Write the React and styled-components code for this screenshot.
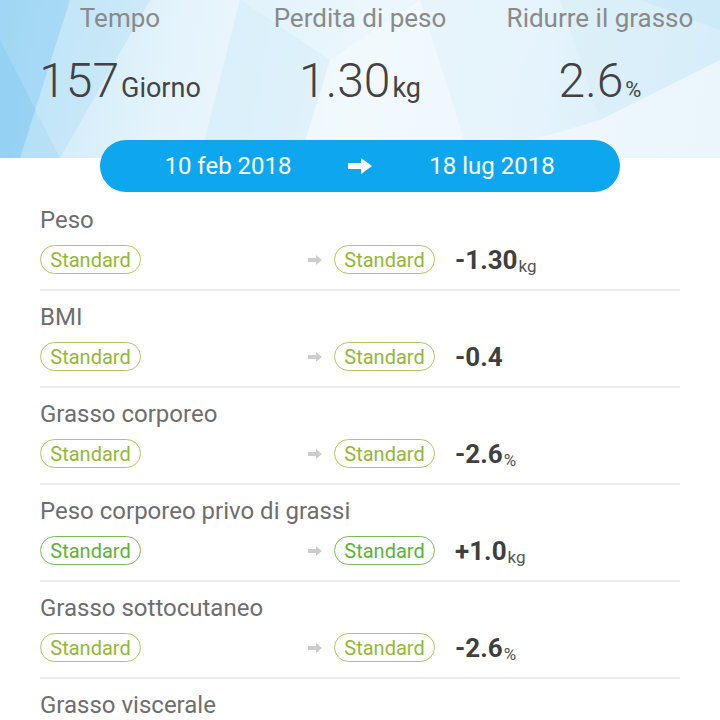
import React from "react";
import styled, { createGlobalStyle } from "styled-components";

const GlobalStyle = createGlobalStyle`
  html, body {
    margin: 0;
    padding: 0;
    background: #ffffff;
    overflow: hidden;
    font-family: Roboto, "Noto Sans", "Liberation Sans", sans-serif;
  }
`;

//  Header with the three summary values
const Header = styled.header`
  position: relative;
  height: 158px;
  overflow: hidden;
  background: linear-gradient(100deg, #b6e0f7 0%, #dcf0fb 25%, #ecf7fd 50%, #e4f3fc 75%, #d2ebf9 100%);
`;

const Backdrop = styled.svg`
  position: absolute;
  inset: 0;
  width: 100%;
  height: 100%;
`;

const Stats = styled.div`
  position: relative;
  display: grid;
  grid-template-columns: repeat(3, 1fr);
`;

const Stat = styled.div`
  display: flex;
  flex-direction: column;
  align-items: center;
  padding-top: 3px;
`;

const StatLabel = styled.div`
  font-size: 26px;
  line-height: 30px;
  color: #8a8a8a;
`;

const StatValue = styled.div`
  margin-top: 20px;
  display: flex;
  align-items: baseline;
  color: #424242;
`;

const BigNumber = styled.span`
  font-size: 48px;
  line-height: 56px;
  font-weight: 300;
`;

const BigUnit = styled.span`
  font-size: ${(p) => p.size || 27}px;
  margin-left: 2px;
  color: #444;
`;

//  Blue date range pill
const RangeBar = styled.div`
  position: relative;
  margin: -18px 100px 0;
  height: 52px;
  border-radius: 26px;
  background: #0ea7ef;
  display: grid;
  grid-template-columns: 1fr auto 1fr;
  align-items: center;
  padding: 0 8px;
  color: #ffffff;
  font-size: 24px;
`;

const RangeDate = styled.span`
  text-align: center;
`;

//  List of measurements
const List = styled.div`
  margin: 2px 40px 0;
`;

const Row = styled.div`
  padding: 12px 0 15px;
  border-bottom: 2px solid #ebebeb;
`;

const RowTitle = styled.div`
  font-size: 24px;
  line-height: 28px;
  color: #6e6e6e;
`;

const RowLine = styled.div`
  margin-top: 11px;
  display: flex;
  align-items: center;
  height: 29px;
`;

const FromSlot = styled.div`
  width: 268px;
`;

const Tag = styled.span`
  box-sizing: border-box;
  display: inline-flex;
  align-items: center;
  justify-content: center;
  width: 101px;
  height: 29px;
  border-radius: 15px;
  border: 1px solid ${(p) => (p.strong ? "#78bd55" : "#b0c85a")};
  color: ${(p) => (p.strong ? "#5db23a" : "#93b934")};
  font-size: 20px;
`;

const SmallArrow = styled.svg`
  width: 14px;
  height: 10px;
  margin-right: 12px;
`;

const Change = styled.div`
  margin-left: 20px;
  display: flex;
  align-items: baseline;
  color: #3f3f3f;
`;

const ChangeNumber = styled.span`
  font-size: 26px;
  font-weight: 700;
`;

const ChangeUnit = styled.span`
  font-size: 17px;
  color: #555;
  margin-left: 1px;
  position: relative;
  top: 3px;
`;

const rows = [
    { title: "Peso", value: "-1.30", unit: "kg" },
    { title: "BMI", value: "-0.4", unit: "" },
    { title: "Grasso corporeo", value: "-2.6", unit: "%" },
    { title: "Peso corporeo privo di grassi", value: "+1.0", unit: "kg", strong: true },
    { title: "Grasso sottocutaneo", value: "-2.6", unit: "%" },
    { title: "Grasso viscerale", value: "", unit: "" }
];

function Facets()
{
    return (
        <Backdrop viewBox="0 0 720 158" preserveAspectRatio="none">
            <polygon points="0,0 70,0 20,158 0,158" fill="#8fd0f2" opacity="0.55" />
            <polygon points="0,40 60,158 0,158" fill="#7cc6ef" opacity="0.35" />
            <polygon points="70,0 150,0 60,158 20,158" fill="#c2e5f8" opacity="0.5" />
            <polygon points="150,0 240,0 200,158 60,158" fill="#ffffff" opacity="0.25" />
            <polygon points="240,0 330,60 300,158 200,158" fill="#d6eefa" opacity="0.5" />
            <polygon points="330,60 420,0 470,158 300,158" fill="#ffffff" opacity="0.3" />
            <polygon points="420,0 560,0 470,158" fill="#e6f4fc" opacity="0.6" />
            <polygon points="560,0 720,0 720,60 600,120" fill="#d8eef9" opacity="0.6" />
            <polygon points="470,158 600,120 720,60 720,158" fill="#f3f9fd" opacity="0.7" />
            <polygon points="640,0 720,0 720,30" fill="#c8e6f7" opacity="0.6" />
        </Backdrop>
    );
}

export default function App()
{
    return (
        <>
            <GlobalStyle />
            <Header>
                <Facets />
                <Stats>
                    <Stat>
                        <StatLabel>Tempo</StatLabel>
                        <StatValue>
                            <BigNumber>157</BigNumber>
                            <BigUnit>Giorno</BigUnit>
                        </StatValue>
                    </Stat>
                    <Stat>
                        <StatLabel>Perdita di peso</StatLabel>
                        <StatValue>
                            <BigNumber>1.30</BigNumber>
                            <BigUnit>kg</BigUnit>
                        </StatValue>
                    </Stat>
                    <Stat>
                        <StatLabel>Ridurre il grasso</StatLabel>
                        <StatValue>
                            <BigNumber>2.6</BigNumber>
                            <BigUnit size={22}>%</BigUnit>
                        </StatValue>
                    </Stat>
                </Stats>
            </Header>

            <RangeBar>
                <RangeDate>10 feb 2018</RangeDate>
                <svg width="24" height="16" viewBox="0 0 24 16">
                    <path d="M0 5 H13 V0 L24 8 L13 16 V11 H0 Z" fill="#ffffff" />
                </svg>
                <RangeDate>18 lug 2018</RangeDate>
            </RangeBar>

            <List>
                {rows.map((row) => (
                    <Row key={row.title}>
                        <RowTitle>{row.title}</RowTitle>
                        {row.value && (
                            <RowLine>
                                <FromSlot>
                                    <Tag strong={row.strong}>Standard</Tag>
                                </FromSlot>
                                <SmallArrow viewBox="0 0 14 10">
                                    <path d="M0 3 H8 V0 L14 5 L8 10 V7 H0 Z" fill="#cdcdcd" />
                                </SmallArrow>
                                <Tag strong={row.strong}>Standard</Tag>
                                <Change>
                                    <ChangeNumber>{row.value}</ChangeNumber>
                                    {row.unit && <ChangeUnit>{row.unit}</ChangeUnit>}
                                </Change>
                            </RowLine>
                        )}
                    </Row>
                ))}
            </List>
        </>
    );
}
